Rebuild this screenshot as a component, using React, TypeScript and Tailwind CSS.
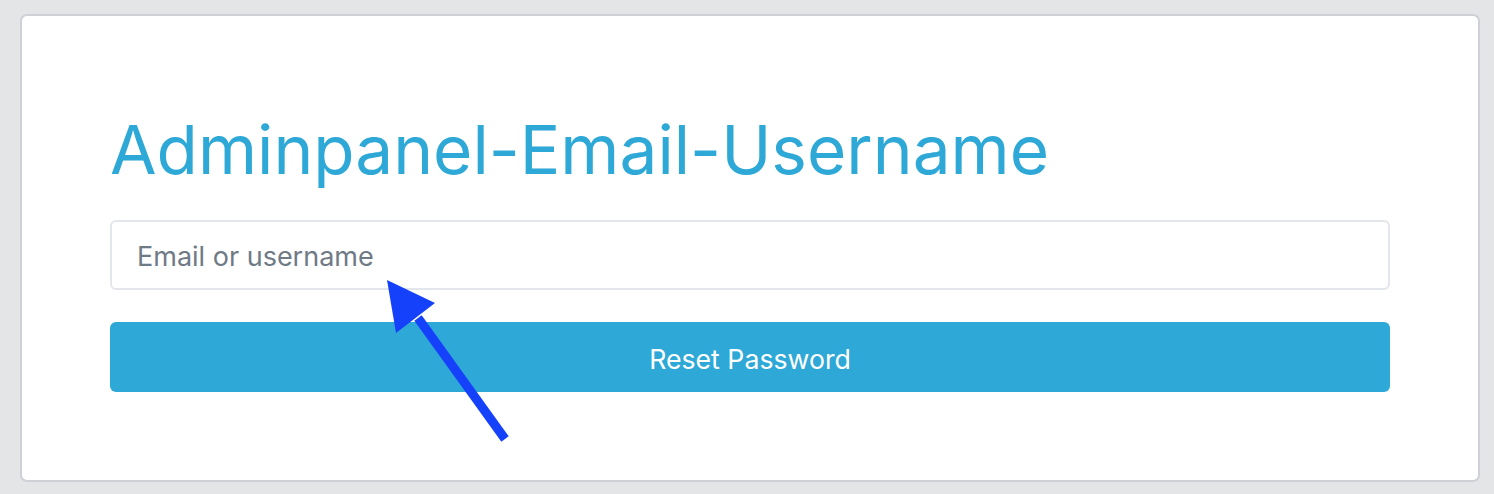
export default function App() {
  return (
    <div className="relative w-[1494px] h-[494px] bg-[#e4e5e7] pt-[14px] pl-[20px]" style={{ fontFamily: 'Inter, "Noto Sans", sans-serif' }}>
      <div className="w-[1460px] h-[468px] bg-white border-2 border-[#cdd1d6] rounded-[7px] pl-[88px] pr-[88px] pt-[92px]">
        <h1 className="text-[#2ea8d6] text-[67.5px] leading-[80px] tracking-[0px] pt-[2px] h-[80px]">Adminpanel-Email-Username</h1>
        <div className="mt-[32px] h-[70px] border-2 border-[#e3e6ea] rounded-[6px] flex items-center pl-[25px] pt-[4px] text-[27px] text-[#6f7a87]">
          Email or username
        </div>
        <button className="mt-[32px] w-full h-[70px] bg-[#2ea8d6] rounded-[6px] text-white text-[26.7px] flex items-center justify-center pt-[4px]">
          Reset Password
        </button>
      </div>
      <svg className="absolute left-0 top-0" width="1494" height="494" viewBox="0 0 1494 494">
        <line x1="505" y1="439" x2="418" y2="318" stroke="#1541fb" strokeWidth="9" />
        <polygon points="387,280 435,303 396,333" fill="#1541fb" />
      </svg>
    </div>
  );
}
